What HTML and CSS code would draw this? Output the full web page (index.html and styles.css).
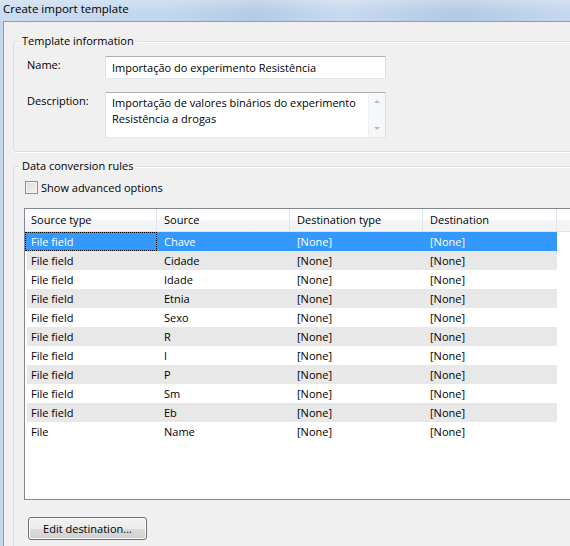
FILE: index.html
```html
<!DOCTYPE html>
<html lang="pt">
<head>
<meta charset="utf-8">
<title>Create import template</title>
<link rel="stylesheet" href="styles.css">
</head>
<body>
<div class="titlebar">Create import template</div>
<div class="frame">
  <div class="client">
    <section class="group group-info">
      <div class="group-title">Template information</div>
      <div class="form">
        <div class="flabel">Name:</div>
        <div class="textbox">Importação do experimento Resistência</div>
        <div class="flabel">Description:</div>
        <div class="textarea">
          <div class="ta-text">Importação de valores binários do experimento<br>Resistência a drogas</div>
          <div class="vscroll"><span class="arrow up"></span><span class="arrow down"></span></div>
        </div>
      </div>
    </section>
    <section class="group group-rules">
      <div class="group-title">Data conversion rules</div>
      <div class="check"><span class="box"></span><span>Show advanced options</span></div>
      <div class="list">
        <div class="list-head">
          <div class="hcell c1">Source type</div>
          <div class="hcell c2">Source</div>
          <div class="hcell c3">Destination type</div>
          <div class="hcell c4">Destination</div>
          <div class="hcell filler"></div>
        </div>
        <div class="list-body">
          <div class="row selected"><div class="cell c1 focus">File field</div><div class="cell c2">Chave</div><div class="cell c3">[None]</div><div class="cell c4">[None]</div></div>
          <div class="row alt"><div class="cell c1">File field</div><div class="cell c2">Cidade</div><div class="cell c3">[None]</div><div class="cell c4">[None]</div></div>
          <div class="row"><div class="cell c1">File field</div><div class="cell c2">Idade</div><div class="cell c3">[None]</div><div class="cell c4">[None]</div></div>
          <div class="row alt"><div class="cell c1">File field</div><div class="cell c2">Etnia</div><div class="cell c3">[None]</div><div class="cell c4">[None]</div></div>
          <div class="row"><div class="cell c1">File field</div><div class="cell c2">Sexo</div><div class="cell c3">[None]</div><div class="cell c4">[None]</div></div>
          <div class="row alt"><div class="cell c1">File field</div><div class="cell c2">R</div><div class="cell c3">[None]</div><div class="cell c4">[None]</div></div>
          <div class="row"><div class="cell c1">File field</div><div class="cell c2">I</div><div class="cell c3">[None]</div><div class="cell c4">[None]</div></div>
          <div class="row alt"><div class="cell c1">File field</div><div class="cell c2">P</div><div class="cell c3">[None]</div><div class="cell c4">[None]</div></div>
          <div class="row"><div class="cell c1">File field</div><div class="cell c2">Sm</div><div class="cell c3">[None]</div><div class="cell c4">[None]</div></div>
          <div class="row alt"><div class="cell c1">File field</div><div class="cell c2">Eb</div><div class="cell c3">[None]</div><div class="cell c4">[None]</div></div>
          <div class="row"><div class="cell c1">File</div><div class="cell c2">Name</div><div class="cell c3">[None]</div><div class="cell c4">[None]</div></div>
        </div>
      </div>
      <button class="btn" type="button">Edit destination...</button>
    </section>
  </div>
</div>
</body>
</html>
```
FILE: styles.css
```css
* { box-sizing: border-box; }
html, body {
  margin: 0;
  width: 570px;
  height: 546px;
  overflow: hidden;
}
body {
  font-family: "Open Sans", "Noto Sans", sans-serif;
  font-size: 11px;
  color: #000;
  background: #f0f0f0;
}
.titlebar {
  height: 21px;
  line-height: 18px;
  padding-left: 3px;
  font-size: 11.5px;
  color: #000;
  background:
    linear-gradient(to bottom, rgba(255,255,255,0.25), rgba(255,255,255,0) 60%),
    linear-gradient(to right, #cadcf0 0%, #c2d6ec 30%, #b4cbe5 45%, #c8daee 60%, #b3c9e3 80%, #c5d8ed 100%);
}
.frame {
  padding-left: 3px;
  background: #c3d6eb;
  height: 525px;
}
.client {
  height: 100%;
  overflow: hidden;
  background: #f0f0f0;
  border-left: 1px solid #8a9db3;
  border-top: 1px solid #8a9db3;
  padding-top: 19px;
}
.group {
  border: 1px solid #d5dfe5;
  box-shadow: 0 1px 0 #fff, inset 0 1px 0 #fff;
  margin: 0 -60px 0 9px;
  border-radius: 3px;
}
.group-title {
  display: block;
  width: max-content;
  margin: -9px 0 0 5px;
  padding: 0 3px;
  line-height: 16px;
  height: 16px;
  background: #f0f0f0;
}
.group-info {
  padding-bottom: 13px;
}
.form {
  display: grid;
  grid-template-columns: 78px 281px;
  row-gap: 13px;
  margin: 7px 0 0 13px;
}
.flabel {
  margin-top: 1px;
  line-height: 16px;
}
.textbox {
  height: 23px;
  line-height: 21px;
  padding-left: 6px;
  background: #fff;
  border: 1px solid;
  border-color: #abadb3 #dbdfe6 #e3e9ef #e2e3ea;
  white-space: nowrap;
}
.textarea {
  height: 46px;
  background: #fff;
  border: 1px solid;
  border-color: #abadb3 #dbdfe6 #e3e9ef #e2e3ea;
  display: flex;
}
.ta-text {
  flex: 1;
  padding: 2px 0 0 6px;
  line-height: 16px;
  white-space: nowrap;
}
.vscroll {
  width: 17px;
  background: #f6f7f8;
  border-left: 1px solid #eef0f2;
  display: flex;
  flex-direction: column;
  justify-content: space-between;
  align-items: center;
  padding: 7px 0 7px;
}
.arrow {
  width: 0;
  height: 0;
  border-left: 3px solid transparent;
  border-right: 3px solid transparent;
}
.arrow.up { border-bottom: 3px solid #b9bcc0; }
.arrow.down { border-top: 3px solid #b9bcc0; }

.group-rules {
  margin-top: 14px;
  height: 420px;
}
.check {
  display: flex;
  align-items: center;
  gap: 3px;
  height: 16px;
  margin: 5px 0 0 11px;
}
.box {
  width: 13px;
  height: 13px;
  border: 1px solid #8e8f8f;
  background: linear-gradient(135deg, #dcdcdc, #f4f4f4);
  box-shadow: inset 0 0 0 1px #f4f4f4;
}
.list {
  margin: 13px 0 0 10px;
  width: 560px;
  height: 292px;
  background: #fff;
  border: 1px solid #828790;
}
.list-head {
  display: flex;
  height: 23px;
  border-bottom: 1px solid #e2e4e8;
  background: linear-gradient(to bottom, #ffffff 0%, #ffffff 50%, #f4f5f7 51%, #f2f3f5 100%);
}
.hcell {
  height: 22px;
  line-height: 22px;
  border-right: 1px solid #e3e5e8;
  padding-left: 7px;
  white-space: nowrap;
}
.hcell.c1, .cell.c1 { width: 132px; padding-left: 6px; }
.hcell.c2, .cell.c2 { width: 133px; }
.hcell.c3, .cell.c3 { width: 133px; }
.hcell.c4, .cell.c4 { width: 134px; }
.hcell.filler { flex: 1; border-right: 0; }
.row {
  display: flex;
  height: 19px;
  line-height: 19px;
}
.row.alt {
  background: linear-gradient(to right, transparent 2px, #e8e8e8 2px);
  width: 532px;
}
.row.selected {
  background: #3399ff;
  color: #fff;
  width: 532px;
}
.cell {
  padding-left: 7px;
  white-space: nowrap;
}
.cell.focus {
  outline: 1px dotted #000;
  outline-offset: -1px;
}
.btn {
  display: block;
  margin: 17px 0 0 14px;
  width: 119px;
  height: 23px;
  padding: 0;
  font: inherit;
  color: #000;
  border: 1px solid #707070;
  border-radius: 3px;
  background: linear-gradient(to bottom, #f2f2f2 0%, #ebebeb 50%, #dddddd 51%, #cfcfcf 100%);
  box-shadow: inset 0 0 0 1px #fcfcfc;
}
```
